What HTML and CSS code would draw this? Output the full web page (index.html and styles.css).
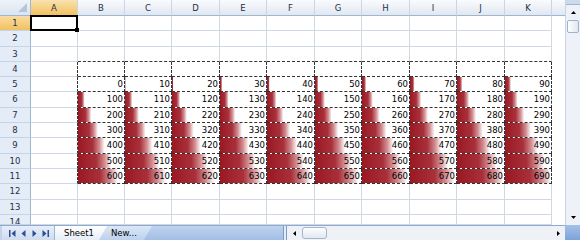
FILE: index.html
```html
<!DOCTYPE html>
<html lang="en">
<head>
    <meta charset="UTF-8">
    <title>Data bars</title>
    <link rel="stylesheet" href="styles.css">
</head>
<body>
<div class="app">
    <div class="sheet">
        <div class="row head">
            <div class="corner"><svg width="10" height="10" viewBox="0 0 10 10"><polygon points="9,0 9,9 0,9" fill="#b6c6da"/></svg></div>
            <div class="ch sel">A</div><div class="ch">B</div><div class="ch">C</div><div class="ch">D</div><div class="ch">E</div><div class="ch">F</div><div class="ch">G</div><div class="ch">H</div><div class="ch">I</div><div class="ch">J</div><div class="ch">K</div>
            <div class="fill"></div>
        </div>
        <div class="row h15">
            <div class="rh sel">1</div>
            <div class="c a1"></div><div class="c"></div><div class="c"></div><div class="c"></div><div class="c"></div><div class="c"></div><div class="c"></div><div class="c"></div><div class="c"></div><div class="c"></div><div class="c"></div>
        </div>
        <div class="row h16">
            <div class="rh">2</div>
            <div class="c"></div><div class="c"></div><div class="c"></div><div class="c"></div><div class="c"></div><div class="c"></div><div class="c"></div><div class="c"></div><div class="c"></div><div class="c"></div><div class="c"></div>
        </div>
        <div class="row h15">
            <div class="rh">3</div>
            <div class="c"></div><div class="c top"></div><div class="c top"></div><div class="c top"></div><div class="c top"></div><div class="c top"></div><div class="c top"></div><div class="c top"></div><div class="c top"></div><div class="c top"></div><div class="c top"></div>
        </div>
        <div class="row h15">
            <div class="rh">4</div>
            <div class="c lft"></div><div class="c d"></div><div class="c d"></div><div class="c d"></div><div class="c d"></div><div class="c d"></div><div class="c d"></div><div class="c d"></div><div class="c d"></div><div class="c d"></div><div class="c d"></div>
        </div>
        <div class="row h15">
            <div class="rh">5</div>
            <div class="c lft"></div>
            <div class="c d">0</div>
            <div class="c d bar" style="background-size:1.4% 100%">10</div>
            <div class="c d bar" style="background-size:2.9% 100%">20</div>
            <div class="c d bar" style="background-size:4.3% 100%">30</div>
            <div class="c d bar" style="background-size:5.8% 100%">40</div>
            <div class="c d bar" style="background-size:7.2% 100%">50</div>
            <div class="c d bar" style="background-size:8.7% 100%">60</div>
            <div class="c d bar" style="background-size:10.1% 100%">70</div>
            <div class="c d bar" style="background-size:11.6% 100%">80</div>
            <div class="c d bar" style="background-size:13% 100%">90</div>
        </div>
        <div class="row h16">
            <div class="rh">6</div>
            <div class="c lft"></div>
            <div class="c d bar" style="background-size:14.5% 100%">100</div>
            <div class="c d bar" style="background-size:15.9% 100%">110</div>
            <div class="c d bar" style="background-size:17.4% 100%">120</div>
            <div class="c d bar" style="background-size:18.8% 100%">130</div>
            <div class="c d bar" style="background-size:20.3% 100%">140</div>
            <div class="c d bar" style="background-size:21.7% 100%">150</div>
            <div class="c d bar" style="background-size:23.2% 100%">160</div>
            <div class="c d bar" style="background-size:24.6% 100%">170</div>
            <div class="c d bar" style="background-size:26.1% 100%">180</div>
            <div class="c d bar" style="background-size:27.5% 100%">190</div>
        </div>
        <div class="row h15">
            <div class="rh">7</div>
            <div class="c lft"></div>
            <div class="c d bar" style="background-size:29% 100%">200</div>
            <div class="c d bar" style="background-size:30.4% 100%">210</div>
            <div class="c d bar" style="background-size:31.9% 100%">220</div>
            <div class="c d bar" style="background-size:33.3% 100%">230</div>
            <div class="c d bar" style="background-size:34.8% 100%">240</div>
            <div class="c d bar" style="background-size:36.2% 100%">250</div>
            <div class="c d bar" style="background-size:37.7% 100%">260</div>
            <div class="c d bar" style="background-size:39.1% 100%">270</div>
            <div class="c d bar" style="background-size:40.6% 100%">280</div>
            <div class="c d bar" style="background-size:42% 100%">290</div>
        </div>
        <div class="row h15">
            <div class="rh">8</div>
            <div class="c lft"></div>
            <div class="c d bar" style="background-size:43.5% 100%">300</div>
            <div class="c d bar" style="background-size:44.9% 100%">310</div>
            <div class="c d bar" style="background-size:46.4% 100%">320</div>
            <div class="c d bar" style="background-size:47.8% 100%">330</div>
            <div class="c d bar" style="background-size:49.3% 100%">340</div>
            <div class="c d bar" style="background-size:50.7% 100%">350</div>
            <div class="c d bar" style="background-size:52.2% 100%">360</div>
            <div class="c d bar" style="background-size:53.6% 100%">370</div>
            <div class="c d bar" style="background-size:55.1% 100%">380</div>
            <div class="c d bar" style="background-size:56.5% 100%">390</div>
        </div>
        <div class="row h16">
            <div class="rh">9</div>
            <div class="c lft"></div>
            <div class="c d bar" style="background-size:58% 100%">400</div>
            <div class="c d bar" style="background-size:59.4% 100%">410</div>
            <div class="c d bar" style="background-size:60.9% 100%">420</div>
            <div class="c d bar" style="background-size:62.3% 100%">430</div>
            <div class="c d bar" style="background-size:63.8% 100%">440</div>
            <div class="c d bar" style="background-size:65.2% 100%">450</div>
            <div class="c d bar" style="background-size:66.7% 100%">460</div>
            <div class="c d bar" style="background-size:68.1% 100%">470</div>
            <div class="c d bar" style="background-size:69.6% 100%">480</div>
            <div class="c d bar" style="background-size:71% 100%">490</div>
        </div>
        <div class="row h15">
            <div class="rh">10</div>
            <div class="c lft"></div>
            <div class="c d bar" style="background-size:72.5% 100%">500</div>
            <div class="c d bar" style="background-size:73.9% 100%">510</div>
            <div class="c d bar" style="background-size:75.4% 100%">520</div>
            <div class="c d bar" style="background-size:76.8% 100%">530</div>
            <div class="c d bar" style="background-size:78.3% 100%">540</div>
            <div class="c d bar" style="background-size:79.7% 100%">550</div>
            <div class="c d bar" style="background-size:81.2% 100%">560</div>
            <div class="c d bar" style="background-size:82.6% 100%">570</div>
            <div class="c d bar" style="background-size:84.1% 100%">580</div>
            <div class="c d bar" style="background-size:85.5% 100%">590</div>
        </div>
        <div class="row h15">
            <div class="rh">11</div>
            <div class="c lft"></div>
            <div class="c d bar" style="background-size:87% 100%">600</div>
            <div class="c d bar" style="background-size:88.4% 100%">610</div>
            <div class="c d bar" style="background-size:89.9% 100%">620</div>
            <div class="c d bar" style="background-size:91.3% 100%">630</div>
            <div class="c d bar" style="background-size:92.8% 100%">640</div>
            <div class="c d bar" style="background-size:94.2% 100%">650</div>
            <div class="c d bar" style="background-size:95.7% 100%">660</div>
            <div class="c d bar" style="background-size:97.1% 100%">670</div>
            <div class="c d bar" style="background-size:98.6% 100%">680</div>
            <div class="c d bar" style="background-size:100% 100%">690</div>
        </div>
        <div class="row h16">
            <div class="rh">12</div>
            <div class="c"></div><div class="c"></div><div class="c"></div><div class="c"></div><div class="c"></div><div class="c"></div><div class="c"></div><div class="c"></div><div class="c"></div><div class="c"></div><div class="c"></div>
        </div>
        <div class="row h15">
            <div class="rh">13</div>
            <div class="c"></div><div class="c"></div><div class="c"></div><div class="c"></div><div class="c"></div><div class="c"></div><div class="c"></div><div class="c"></div><div class="c"></div><div class="c"></div><div class="c"></div>
        </div>
        <div class="row h10">
            <div class="rh">14</div>
            <div class="c"></div><div class="c"></div><div class="c"></div><div class="c"></div><div class="c"></div><div class="c"></div><div class="c"></div><div class="c"></div><div class="c"></div><div class="c"></div><div class="c"></div>
        </div>
    </div>

    <div class="vscroll">
        <div class="vsplit"></div>
        <div class="sbtn up"><svg width="5" height="3" viewBox="0 0 5 3"><polygon points="2.5,0 5,3 0,3" fill="#000"/></svg></div>
        <div class="vthumb"></div>
        <div class="vtrack"></div>
        <div class="sbtn down"><svg width="5" height="3" viewBox="0 0 5 3"><polygon points="0,0 5,0 2.5,3" fill="#000"/></svg></div>
    </div>

    <div class="tabbar">
        <div class="nav">
            <svg width="7" height="7" viewBox="0 0 7 7"><rect x="0" y="0" width="1.5" height="7" fill="#2b4f93"/><polygon points="6.5,0 2.5,3.5 6.5,7" fill="#2b4f93"/></svg>
            <svg width="5" height="7" viewBox="0 0 5 7"><polygon points="4.5,0 0.5,3.5 4.5,7" fill="#2b4f93"/></svg>
            <svg width="5" height="7" viewBox="0 0 5 7"><polygon points="0.5,0 4.5,3.5 0.5,7" fill="#2b4f93"/></svg>
            <svg width="7" height="7" viewBox="0 0 7 7"><polygon points="0.5,0 4.5,3.5 0.5,7" fill="#2b4f93"/><rect x="5.5" y="0" width="1.5" height="7" fill="#2b4f93"/></svg>
        </div>
        <div class="tab active">Sheet1</div>
        <div class="tab next">New...</div>
        <div class="strip"></div>
        <div class="splitter"></div>
        <div class="hscroll">
            <div class="hbtn"><svg width="3" height="5" viewBox="0 0 3 5"><polygon points="3,0 0,2.5 3,5" fill="#000"/></svg></div>
            <div class="hthumb"></div>
            <div class="htrack"></div>
            <div class="hbtn"><svg width="3" height="5" viewBox="0 0 3 5"><polygon points="0,0 3,2.5 0,5" fill="#000"/></svg></div>
        </div>
    </div>
    <div class="box"></div>
</div>
</body>
</html>
```

FILE: styles.css
```css
html, body {
    margin: 0;
    padding: 0;
}
body {
    width: 580px;
    height: 240px;
    overflow: hidden;
    background: #fff;
    color: #000;
    font-family: "DejaVu Sans", Verdana, sans-serif;
    font-size: 8.5px;
}
.app {
    display: grid;
    grid-template-columns: 565px 15px;
    grid-template-rows: 225px 15px;
    width: 580px;
    height: 240px;
}

/* sheet grid */
.sheet {
    overflow: hidden;
    background: #fff;
}
.row {
    display: grid;
    grid-template-columns: 31px 47px 47px 47px 48px 47px 48px 47px 48px 47px 48px 47px 1fr;
}
.row > div {
    box-sizing: border-box;
    white-space: nowrap;
    overflow: hidden;
}
.head {
    height: 16px;
    line-height: 16px;
    background: linear-gradient(#f9fbfd, #dfe6f0);
}
.h15 { height: 15px; line-height: 14px; }
.h16 { height: 16px; line-height: 15px; }
.h10 { height: 10px; line-height: 14px; }

.corner {
    display: flex;
    justify-content: flex-end;
    align-items: flex-end;
    padding: 0 2px 2px 0;
    background: linear-gradient(#eef3f9, #dbe4ef);
    border-right: 1px solid #9eb6ce;
    border-bottom: 1px solid #9eb6ce;
}
.corner svg { display: block; }
.ch {
    text-align: center;
    color: #1e2f48;
    border-right: 1px solid #c9d6e6;
    border-bottom: 1px solid #9eb6ce;
}
.ch.sel {
    background: linear-gradient(#f9e2ad, #f2c160);
    border-bottom-color: #c29b49;
}
.head .fill {
    border-bottom: 1px solid #9eb6ce;
}
.rh {
    text-align: center;
    color: #1e2f48;
    background: #e4ecf7;
    border-right: 1px solid #9eb6ce;
    border-bottom: 1px solid #c5d3e5;
}
.rh.sel {
    background: linear-gradient(#f9dca2, #f1c15f);
}

.c {
    text-align: right;
    padding-right: 1px;
    border-right: 1px solid #d0d7e5;
    border-bottom: 1px solid #d0d7e5;
}
.c.top { border-bottom: 1px dashed #333; }
.c.lft { border-right: 1px dashed #333; }
.c.d {
    border-right: 1px dashed #333;
    border-bottom: 1px dashed #333;
}
.bar {
    background-image: linear-gradient(to right, #9a1822, #a8303a 55%, #d28c91 80%, #fff);
    background-repeat: no-repeat;
}

/* selected cell */
.row > .a1 {
    position: relative;
    overflow: visible;
}
.a1::before {
    content: "";
    position: absolute;
    left: -1px;
    top: -1px;
    right: -1px;
    bottom: -1px;
    border: 2px solid #000;
}
.a1::after {
    content: "";
    position: absolute;
    right: -2px;
    bottom: -2px;
    width: 4px;
    height: 4px;
    background: #000;
}

/* vertical scrollbar */
.vscroll {
    display: flex;
    flex-direction: column;
    box-sizing: border-box;
    background: #eef2f8;
    border-left: 1px solid #c8d4e4;
}
.vsplit {
    height: 4px;
    background: #cddaec;
    border-bottom: 1px solid #9eb6ce;
}
.sbtn {
    height: 15px;
    display: flex;
    align-items: center;
    justify-content: center;
}
.sbtn svg, .hbtn svg, .nav svg { display: block; }
.vthumb {
    height: 13px;
    margin: 0 1px;
    box-sizing: border-box;
    border: 1px solid #9fb2cb;
    border-radius: 2px;
    background: linear-gradient(to right, #fefefe, #e1e8f2);
}
.vtrack { flex: 1; }

/* sheet tabs + horizontal scrollbar */
.tabbar {
    display: flex;
    box-sizing: border-box;
    background: linear-gradient(#bed2ee, #a2bee6);
    border-top: 1px solid #8eaad2;
    line-height: 14px;
}
.nav {
    width: 55px;
    box-sizing: border-box;
    display: flex;
    align-items: center;
    justify-content: space-around;
    padding: 0 2px 0 4px;
    background: linear-gradient(#e6eef9, #cfdcee);
    border-left: 2px solid #c3d3ea;
    border-right: 1px solid #9eb6ce;
}
.tab {
    box-sizing: border-box;
    clip-path: polygon(0 0, 100% 0, calc(100% - 8px) 100%, 0 100%);
}
.tab.active {
    position: relative;
    z-index: 1;
    width: 52px;
    padding-left: 9px;
    background: linear-gradient(#ffffff, #e6edf7);
}
.tab.next {
    width: 53px;
    margin-left: -8px;
    padding-left: 12px;
    background: linear-gradient(#dce7f5, #bcd1ed);
}
.strip { flex: 1; }
.splitter {
    width: 4px;
    box-sizing: border-box;
    background: #e3ebf6;
    border-left: 1px solid #7f9cc6;
    border-right: 1px solid #7f9cc6;
}
.hscroll {
    width: 278px;
    display: flex;
    background: #eef1f6;
}
.hbtn {
    width: 14px;
    display: flex;
    align-items: center;
    justify-content: center;
}
.hthumb {
    width: 25px;
    margin: 1px 0 1px 1px;
    box-sizing: border-box;
    border: 1px solid #a5b5ca;
    border-radius: 3px;
    background: linear-gradient(#fdfefe, #e2e8f1);
}
.htrack { flex: 1; }
.box {
    background: linear-gradient(#a3c0e8, #7ea2d7);
}
```
